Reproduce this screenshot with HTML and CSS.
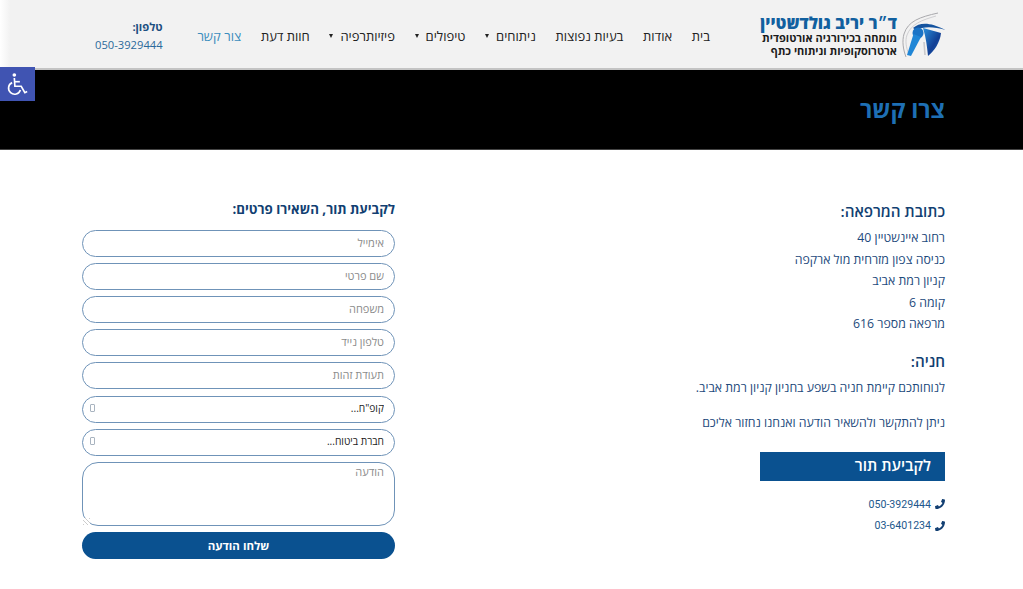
FILE: index.html
```html
<!DOCTYPE html>
<html lang="he" dir="rtl">
<head>
    <meta charset="UTF-8">
    <meta name="viewport" content="width=device-width, initial-scale=1.0">
    <title>צור קשר</title>
    <link rel="stylesheet" href="styles.css">
</head>
<body>
    <!-- Accessibility Button -->
    <a class="a11y-btn" href="#" aria-label="נגישות">
        <svg viewBox="0 0 24 26" width="22" height="24" fill="none" stroke="#fff" stroke-width="1.8">
            <circle cx="8" cy="3.2" r="2" fill="#fff" stroke="none"/>
            <path d="M8 6.5 L8.6 15.5 H15.5 L19.5 22.5 L22 21.3"/>
            <path d="M8.4 10.5 H14"/>
            <path d="M5.6 11.5 A6.6 6.6 0 1 0 14.6 19.5"/>
        </svg>
    </a>

    <!-- Site Header -->
    <header class="site-header">
        <a class="logo" href="#">
            <svg class="logo-mark" viewBox="0 0 46 46" width="46" height="46">
                <defs>
                    <linearGradient id="scapula" x1="0" y1="0" x2="1" y2="1">
                        <stop offset="0" stop-color="#2a90dc"/>
                        <stop offset="0.6" stop-color="#123f94"/>
                        <stop offset="1" stop-color="#1a66b8"/>
                    </linearGradient>
                </defs>
                <path d="M6 46 C3 38 2 30 4 23 C8 10 20 6 38 2" fill="none" stroke="#a9a9ad" stroke-width="1"/>
                <path d="M9 44 C6 36 5 30 7 24 C11 13 22 9 36 5" fill="none" stroke="#cfcfd2" stroke-width="1"/>
                <path d="M23 17 L41 22 C40 32 34 40 28 45 C27 36 26 26 23 17Z" fill="url(#scapula)"/>
                <path d="M13 17 C20 11 30 11 45.5 19 C34 15.5 24 15 16 19Z" fill="#14539f"/>
                <circle cx="18" cy="22" r="5.5" fill="#1a73c6"/>
                <path d="M13.5 23 L21 26 L11 45 L7 44Z" fill="#2086d6"/>
                <path d="M24 31 L25 44" fill="none" stroke="#c9c9cc" stroke-width="1.6"/>
            </svg>
            <span class="logo-text">
                <span class="logo-name">ד״ר יריב גולדשטיין</span>
                <span class="logo-line">מומחה בכירורגיה אורטופדית</span>
                <span class="logo-line">ארטרוסקופיות וניתוחי כתף</span>
            </span>
        </a>

        <nav class="main-nav">
            <a href="#">בית</a>
            <a href="#">אודות</a>
            <a href="#">בעיות נפוצות</a>
            <a href="#" class="has-sub">ניתוחים</a>
            <a href="#" class="has-sub">טיפולים</a>
            <a href="#" class="has-sub">פיזיותרפיה</a>
            <a href="#">חוות דעת</a>
            <a href="#" class="active">צור קשר</a>
        </nav>

        <div class="header-phone">
            <div class="header-phone-label">טלפון:</div>
            <div class="header-phone-number">050-3929444</div>
        </div>
    </header>

    <!-- Page Title -->
    <section class="page-banner">
        <h1>צרו קשר</h1>
    </section>

    <main class="contact">
        <!-- Clinic Details -->
        <section class="clinic-info">
            <h2>כתובת המרפאה:</h2>
            <p>רחוב איינשטיין 40</p>
            <p>כניסה צפון מזרחית מול ארקפה</p>
            <p>קניון רמת אביב</p>
            <p>קומה 6</p>
            <p>מרפאה מספר 616</p>

            <h2 class="parking-title">חניה:</h2>
            <p>לנוחותכם קיימת חניה בשפע בחניון קניון רמת אביב.</p>
            <p class="callback">ניתן להתקשר ולהשאיר הודעה ואנחנו נחזור אליכם</p>

            <div class="appointment-box">לקביעת תור</div>

            <div class="phone-list">
                <div class="phone-row">
                    <svg viewBox="0 0 512 512" width="10" height="10"><path d="M493.4 24.6l-104-24c-11.3-2.6-22.9 3.3-27.5 13.9l-48 112c-4.2 9.8-1.4 21.3 6.9 28l60.6 49.6c-36 76.7-98.9 140.5-177.2 177.2l-49.6-60.6c-6.8-8.3-18.2-11.1-28-6.9l-112 48C3.9 366.5-2 378.1.6 389.4l24 104C27.1 504.2 36.7 512 48 512c256.1 0 464-207.5 464-464 0-11.2-7.7-20.9-18.6-23.4z"/></svg>
                    <span>050-3929444</span>
                </div>
                <div class="phone-row">
                    <svg viewBox="0 0 512 512" width="10" height="10"><path d="M493.4 24.6l-104-24c-11.3-2.6-22.9 3.3-27.5 13.9l-48 112c-4.2 9.8-1.4 21.3 6.9 28l60.6 49.6c-36 76.7-98.9 140.5-177.2 177.2l-49.6-60.6c-6.8-8.3-18.2-11.1-28-6.9l-112 48C3.9 366.5-2 378.1.6 389.4l24 104C27.1 504.2 36.7 512 48 512c256.1 0 464-207.5 464-464 0-11.2-7.7-20.9-18.6-23.4z"/></svg>
                    <span>03-6401234</span>
                </div>
            </div>
        </section>

        <!-- Appointment Form -->
        <form class="contact-form">
            <h3>לקביעת תור, השאירו פרטים:</h3>
            <input class="field" type="text" placeholder="אימייל">
            <input class="field" type="text" placeholder="שם פרטי">
            <input class="field" type="text" placeholder="משפחה">
            <input class="field" type="text" placeholder="טלפון נייד">
            <input class="field" type="text" placeholder="תעודת זהות">
            <label class="field select-field">
                <select><option>קופ"ח...</option></select>
                <span class="select-arrow"></span>
            </label>
            <label class="field select-field">
                <select><option>חברת ביטוח...</option></select>
                <span class="select-arrow"></span>
            </label>
            <textarea class="field message-field" placeholder="הודעה"></textarea>
            <button class="submit-btn" type="button">שלחו הודעה</button>
        </form>
    </main>
</body>
</html>
```

FILE: styles.css
```css
/* Base */
* {
    box-sizing: border-box;
}

body {
    margin: 0;
    background: white;
    color: #1d4a7c;
    font-family: 'Open Sans', 'Liberation Sans', sans-serif;
    font-size: 12.3px;
}

a {
    color: inherit;
    text-decoration: none;
}

/* Accessibility Button */
.a11y-btn {
    position: absolute;
    top: 67px;
    left: 0;
    width: 35px;
    height: 34px;
    background: #4054b2;
    display: flex;
    align-items: center;
    justify-content: center;
}

/* Site Header */
.site-header {
    height: 70px;
    padding: 0 77px 0 95px;
    display: flex;
    align-items: center;
    background: linear-gradient(to right, #fff 0, #f2f2f2 10px);
    border-bottom: 2px solid #c4c4c4;
}

.logo {
    flex: none;
    width: 186px;
    display: flex;
    align-items: center;
    gap: 3px;
}

.logo-mark {
    flex: none;
}

.logo-text {
    padding-top: 3px;
    display: flex;
    flex-direction: column;
    white-space: nowrap;
}

.logo-name {
    color: #11609f;
    font-size: 16.5px;
    font-weight: 800;
    line-height: 17px;
}

.logo-line {
    color: #1b1b1b;
    font-size: 11px;
    font-weight: 700;
    line-height: 13px;
}

.main-nav {
    flex: 1;
    margin-right: 50px;
    padding-top: 3px;
    display: flex;
    align-items: center;
    gap: 19.7px;
    color: #222;
    font-size: 13px;
    white-space: nowrap;
}

.main-nav .has-sub {
    display: flex;
    align-items: center;
    gap: 7px;
}

.main-nav .has-sub::after {
    content: "";
    border-top: 4px solid #222;
    border-left: 2.5px solid transparent;
    border-right: 2.5px solid transparent;
}

.main-nav .active {
    color: #3b8dbd;
}

.header-phone {
    padding-top: 3px;
    font-size: 11.2px;
    line-height: 18px;
}

.header-phone-label {
    color: #1c4f80;
    font-weight: 700;
}

.header-phone-number {
    color: #2b6a9b;
}

/* Page Title */
.page-banner {
    height: 80px;
    padding: 0 78px 2px;
    display: flex;
    align-items: center;
    background: black;
    border-bottom: 1px solid #444;
}

.page-banner h1 {
    margin: 0;
    color: #1e6fb4;
    font-size: 23.2px;
    font-weight: 700;
}

/* Contact Section */
.contact {
    padding: 50px 78px 0 82px;
    display: flex;
    justify-content: space-between;
    align-items: flex-start;
}

.clinic-info {
    width: 250px;
}

.clinic-info h2 {
    margin: 0 0 5px;
    color: #123f72;
    font-size: 15.2px;
    font-weight: 600;
    line-height: 22px;
}

.clinic-info p {
    margin: 0;
    line-height: 21.6px;
    white-space: nowrap;
}

.clinic-info .parking-title {
    margin: 15px 0 5px;
}

.clinic-info .callback {
    margin-top: 13.5px;
}

.appointment-box {
    width: 185px;
    height: 29px;
    margin-top: 18px;
    padding: 0 14px;
    background: #0a5190;
    color: white;
    font-size: 15.4px;
    font-weight: 600;
    line-height: 28px;
}

.phone-list {
    margin-top: 13px;
}

.phone-row {
    height: 21.5px;
    display: flex;
    align-items: center;
    gap: 4px;
    color: #22588c;
    font-family: Roboto, 'Open Sans', sans-serif;
    font-size: 10.6px;
}

.phone-row svg {
    fill: #123f72;
}

/* Appointment Form */
.contact-form {
    width: 313px;
    display: flex;
    flex-direction: column;
    gap: 6.2px;
}

.contact-form h3 {
    margin: -1px 0 4.5px;
    color: #123f72;
    font-size: 13.3px;
    font-weight: 700;
    line-height: 20px;
}

.field {
    width: 100%;
    height: 27px;
    padding: 0 10px 2px;
    background: white;
    border: 1px solid #6f93b8;
    border-radius: 14px;
    outline: none;
    font-family: 'Open Sans', 'Liberation Sans', sans-serif;
    font-size: 11px;
    color: #333;
}

.field::placeholder {
    color: #8b8b8b;
    opacity: 1;
}

.select-field {
    padding-left: 7px;
    display: flex;
    align-items: center;
    justify-content: space-between;
    font-size: 10.2px;
}

.select-field select {
    flex: 1;
    border: none;
    background: none;
    outline: none;
    appearance: none;
    padding: 0;
    font: inherit;
    color: #222;
}

.select-arrow {
    width: 5px;
    height: 8px;
    border: 1px solid #a9b4c0;
    border-radius: 1px;
}

.message-field {
    height: 64px;
    padding-top: 1px;
    border-radius: 16px;
    resize: vertical;
}

.message-field::-webkit-resizer {
    background: repeating-linear-gradient(45deg, #ccc 0 1px, white 1px 3px) left bottom / 7px 7px no-repeat;
}

.submit-btn {
    height: 27px;
    background: #0a5190;
    color: white;
    border: none;
    border-radius: 14px;
    font-family: inherit;
    font-size: 11.5px;
    font-weight: 700;
    cursor: pointer;
}
```
